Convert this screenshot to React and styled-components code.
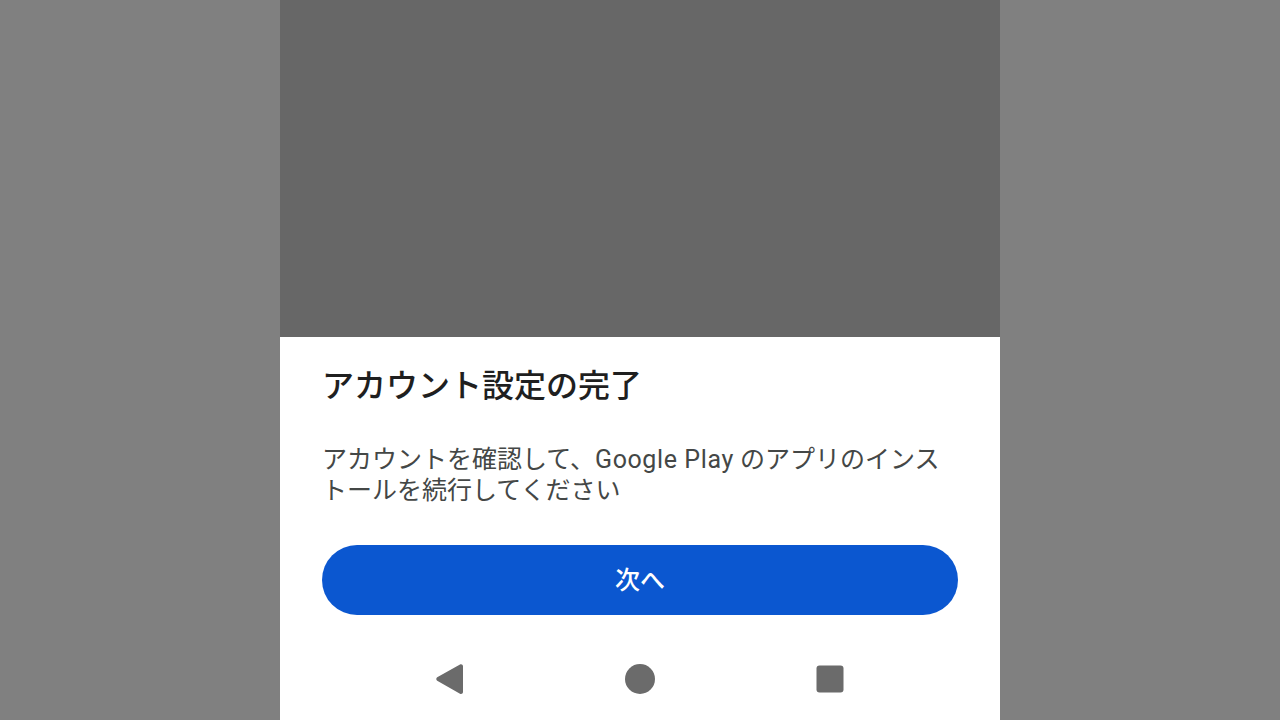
import React from "react";
import styled, { createGlobalStyle } from "styled-components";

const Global = createGlobalStyle`
  html, body {
    margin: 0;
    padding: 0;
    background: #808080;
    font-family: "Roboto", "Noto Sans CJK JP", sans-serif;
  }
`;

const Screen = styled.div`
  width: 1280px;
  height: 720px;
  display: flex;
  justify-content: center;
  background: #808080;
  overflow: hidden;
`;

const Phone = styled.div`
  width: 720px;
  height: 720px;
  display: flex;
  flex-direction: column;
`;

const Scrim = styled.div`
  height: 337px;
  background: #676767;
  flex-shrink: 0;
`;

const Sheet = styled.div`
  flex: 1;
  background: #ffffff;
  display: flex;
  flex-direction: column;
  padding: 28px 42px 9px;
`;

const Title = styled.h1`
  margin: 0;
  font-size: 32px;
  line-height: 42px;
  font-weight: 500;
  color: #1f1f1f;
  font-family: "Roboto", "Noto Sans CJK JP", sans-serif;
`;

const Body = styled.p`
  margin: 37px 8px 0 0;
  font-size: 25px;
  line-height: 31px;
  color: #444746;
  font-family: "Roboto", "Noto Sans CJK JP", sans-serif;
`;

const Latin = styled.span`
  letter-spacing: 0.6px;
`;

const NextButton = styled.button`
  margin-top: 39px;
  height: 70px;
  padding: 0 0 4px;
  border: none;
  border-radius: 35px;
  background: #0b57d0;
  color: #ffffff;
  font-size: 25px;
  font-weight: 500;
  font-family: "Roboto", "Noto Sans CJK JP", sans-serif;
`;

const NavBar = styled.div`
  margin-top: auto;
  height: 64px;
  display: flex;
  justify-content: center;
  align-items: center;
  gap: 158px;
`;

const NavIcon = styled.svg`
  width: 32px;
  height: 32px;
  fill: #6b6b6b;
`;

export default function App() {
  return (
    <Screen>
      <Global />
      <Phone>
        <Scrim />
        <Sheet>
          <Title>アカウント設定の完了</Title>
          <Body>
            アカウントを確認して、<Latin>Google Play</Latin> のアプリのインストールを続行してください
          </Body>
          <NextButton>次へ</NextButton>
          <NavBar>
            <NavIcon viewBox="0 0 32 32">
              <path d="M29 3.2c0-1.6-1.7-2.5-3-1.7L3.2 14.3c-1.2.8-1.2 2.6 0 3.4l22.8 13c1.3.8 3-.1 3-1.7z" />
            </NavIcon>
            <NavIcon viewBox="0 0 32 32">
              <circle cx="16" cy="16" r="15" />
            </NavIcon>
            <NavIcon viewBox="0 0 32 32">
              <rect x="2.5" y="2.5" width="27" height="27" rx="3" />
            </NavIcon>
          </NavBar>
        </Sheet>
      </Phone>
    </Screen>
  );
}
